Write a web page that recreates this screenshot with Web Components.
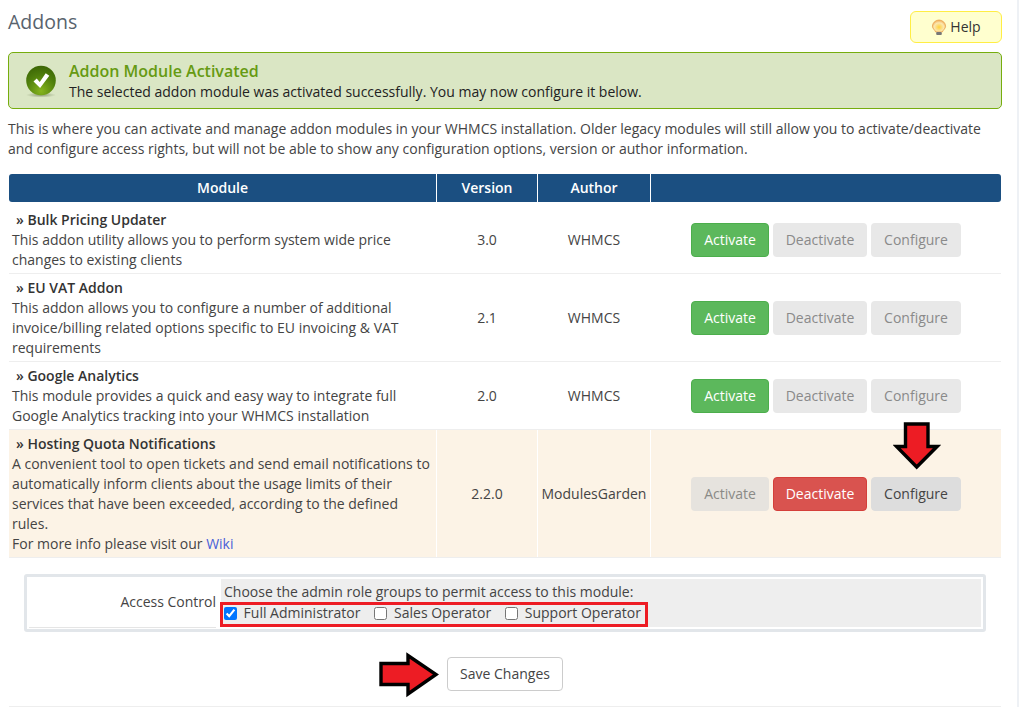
<!DOCTYPE html>
<html lang="en">
<head>
<meta charset="utf-8">
<title>Addons</title>
<style>
  html, body { margin: 0; height: 100%; overflow: hidden; background: #fff; }
  body { font: 14px/20px "Open Sans", sans-serif; color: #444; }
</style>
</head>
<body>
<addons-page>
  <page-head title="Addons"></page-head>
  <success-box heading="Addon Module Activated">The selected addon module was activated successfully. You may now configure it below.</success-box>
  <p>This is where you can activate and manage addon modules in your WHMCS installation. Older legacy modules will still allow you to activate/deactivate and configure access rights, but will not be able to show any configuration options, version or author information.</p>
  <module-table>
    <module-row name="Bulk Pricing Updater" version="3.0" author="WHMCS">This addon utility allows you to perform system wide price changes to existing clients</module-row>
    <module-row name="EU VAT Addon" version="2.1" author="WHMCS">This addon allows you to configure a number of additional invoice/billing related options specific to EU invoicing &amp; VAT requirements</module-row>
    <module-row name="Google Analytics" version="2.0" author="WHMCS">This module provides a quick and easy way to integrate full Google Analytics tracking into your WHMCS installation</module-row>
    <module-row name="Hosting Quota Notifications" version="2.2.0" author="ModulesGarden" active>A convenient tool to open tickets and send email notifications to automatically inform clients about the usage limits of their services that have been exceeded, according to the defined rules.<br>For more info please visit our <a href="#" style="color:#4a5fd8;text-decoration:none">Wiki</a></module-row>
  </module-table>
  <access-control></access-control>
  <save-bar></save-bar>
</addons-page>

<script>
const ARROW_DOWN = `<path d="M12.5 2H35V24.5H44L23.7 45 3.5 24.5H12.5Z" fill="#ed1c24" stroke="#000" stroke-width="3.4"/>`;
const ARROW_RIGHT = `<path d="M2 11.5H29V3.5L57 22.5 29 42V32.5H2Z" fill="#ed1c24" stroke="#000" stroke-width="3.4"/>`;

class AddonsPage extends HTMLElement {
  constructor() {
    super();
    this.attachShadow({ mode: 'open' }).innerHTML = `
      <style>
        :host { display: block; box-sizing: border-box; width: 1019px; height: 707px; padding: 0 17px 0 8px; border-right: 2px solid #eef1f5; }
        .wrap { width: 994px; }
        ::slotted(p) { margin: 10px 0 15px; }
      </style>
      <div class="wrap"><slot></slot></div>`;
  }
}

class PageHead extends HTMLElement {
  constructor() {
    super();
    this.attachShadow({ mode: 'open' }).innerHTML = `
      <style>
        :host { display: flex; justify-content: space-between; align-items: flex-start; height: 52px; }
        h1 { margin: 10px 0 0; font-size: 19.5px; line-height: 24px; font-weight: 400; color: #58636d; }
        .help {
          display: flex; align-items: center; justify-content: center; gap: 3px;
          box-sizing: border-box; width: 92px; height: 32px; margin-top: 11px;
          background: #ffffcf; border: 1px solid #ffee44; border-radius: 6px; color: #333;
        }
        svg { width: 16px; height: 17px; }
      </style>
      <h1>${this.getAttribute('title')}</h1>
      <div class="help">
        <svg viewBox="0 0 16 17">
          <defs><radialGradient id="b" cx=".5" cy=".6" r=".6"><stop offset="0" stop-color="#ffd23c"/><stop offset=".6" stop-color="#fbe7b0"/><stop offset="1" stop-color="#f0a850"/></radialGradient></defs>
          <path d="M8 1a6.6 6.6 0 0 0-6.6 6.2c0 2.4 2.4 3.6 3.3 5.8h6.6c.9-2.2 3.3-3.4 3.3-5.8A6.6 6.6 0 0 0 8 1z" fill="url(#b)" stroke="#e8a24e" stroke-width=".8"/>
          <rect x="5.2" y="13" width="5.6" height="3" rx="1" fill="#777"/>
        </svg>
        <span>Help</span>
      </div>`;
  }
}

class SuccessBox extends HTMLElement {
  constructor() {
    super();
    this.attachShadow({ mode: 'open' }).innerHTML = `
      <style>
        :host {
          display: flex; align-items: center; box-sizing: border-box; height: 57px;
          padding: 0 0 0 16px; gap: 12px;
          background: #dae6c4; border: 1px solid #76ad0e; border-radius: 5px; color: #222;
        }
        svg { width: 32px; height: 33px; flex: none; margin-top: 1px; }
        .text { padding-top: 2px; }
        b { display: block; font-size: 16px; line-height: 20px; font-weight: 600; color: #669a12; margin: -1px 0 1px; }
      </style>
      <svg viewBox="0 0 32 33">
        <defs>
          <radialGradient id="g" cx=".5" cy=".85" r=".85"><stop offset="0" stop-color="#86b51e"/><stop offset=".6" stop-color="#4f7f0c"/><stop offset="1" stop-color="#3c6606"/></radialGradient>
          <radialGradient id="s" cx=".5" cy=".5" r=".5"><stop offset="0" stop-color="#5a6a40" stop-opacity=".6"/><stop offset="1" stop-color="#5a6a40" stop-opacity="0"/></radialGradient>
        </defs>
        <ellipse cx="16" cy="30" rx="15" ry="2.6" fill="url(#s)"/>
        <circle cx="16" cy="15.5" r="14.8" fill="url(#g)"/>
        <path d="M8.5 16.5l3.2-3 3 3.4 6-8.6 3.6 2.4-9.2 12.2z" fill="#fff"/>
      </svg>
      <div class="text"><b>${this.getAttribute('heading')}</b><slot></slot></div>`;
  }
}

const COLUMNS = 'grid-template-columns: 427px 100px 112px 350px; column-gap: 1px;';

class ModuleTable extends HTMLElement {
  constructor() {
    super();
    this.attachShadow({ mode: 'open' }).innerHTML = `
      <style>
        :host { display: block; margin: 0 1px; }
        .head { display: grid; ${COLUMNS} height: 28px; margin-bottom: 4px; }
        .head div {
          display: flex; align-items: center; justify-content: center;
          background: #1b4f81; color: #fff; font-weight: 600;
        }
        .head div:first-child { border-radius: 3px 0 0 3px; }
        .head div:last-child { border-radius: 0 3px 3px 0; }
      </style>
      <div class="head"><div>Module</div><div>Version</div><div>Author</div><div></div></div>
      <slot></slot>`;
  }
}

class ModuleRow extends HTMLElement {
  constructor() {
    super();
    const active = this.hasAttribute('active');
    this.attachShadow({ mode: 'open' }).innerHTML = `
      <style>
        :host { display: grid; ${COLUMNS} border-bottom: 1px solid #eee; position: relative; }
        .cell { padding: 4px 3px 3px; display: flex; align-items: center; justify-content: center; text-align: center; ${active ? 'background: #fcf3e6;' : ''} }
        .info { display: block; text-align: left; }
        b { display: block; font-weight: 600; padding-left: 4px; color: #333; }
        .actions { gap: 4px; }
        svg { position: absolute; left: 884px; top: -8px; width: 48px; height: 49px; }
      </style>
      <div class="cell info"><b>» ${this.getAttribute('name')}</b><slot></slot></div>
      <div class="cell">${this.getAttribute('version')}</div>
      <div class="cell">${this.getAttribute('author')}</div>
      <div class="cell actions">
        <action-button kind="${active ? 'offwarm' : 'green'}" w="78">Activate</action-button>
        <action-button kind="${active ? 'red' : 'off'}" w="94">Deactivate</action-button>
        <action-button kind="${active ? 'plain' : 'off'}" w="90">Configure</action-button>
      </div>
      ${active ? `<svg viewBox="0 0 48 49">${ARROW_DOWN}</svg>` : ''}`;
  }
}

class ActionButton extends HTMLElement {
  constructor() {
    super();
    const styles = {
      green: 'background:#5cb85c;border-color:#4cae4c;color:#fff;',
      red: 'background:#d9534f;border-color:#d43f3a;color:#fff;',
      plain: 'background:#ddd;border-color:#ddd;color:#444;',
      off: 'border-color:transparent;color:#8a8a8a;background:#e8e8e8;',
      offwarm: 'border-color:transparent;color:#8a8a86;background:#e6e3de;',
    };
    this.attachShadow({ mode: 'open' }).innerHTML = `
      <style>
        :host { display: block; }
        div {
          box-sizing: border-box; height: 34px; width: ${this.getAttribute('w')}px;
          display: flex; align-items: center; justify-content: center;
          border: 1px solid; border-radius: 4px; ${styles[this.getAttribute('kind')]}
        }
      </style>
      <div><slot></slot></div>`;
  }
}

class AccessControl extends HTMLElement {
  constructor() {
    super();
    this.attachShadow({ mode: 'open' }).innerHTML = `
      <style>
        :host {
          display: grid; grid-template-columns: 187px 1fr; column-gap: 5px;
          box-sizing: border-box; width: 962px; height: 58px; margin: 16px 0 0 16px;
          padding: 2px; border: 3px solid #e2e6ea; border-radius: 3px;
        }
        .label { display: flex; align-items: center; justify-content: flex-end; padding-bottom: 3px; border-bottom: 1px solid #e5e5e5; margin-bottom: -1px; }
        .field { position: relative; background: #eee; padding: 3px 3px 0; }
        .opts { display: flex; gap: 14px; margin-top: 1px; }
        label { display: flex; align-items: center; gap: 6.6px; }
        input { width: 13px; height: 13px; margin: 0; }
        .mark { position: absolute; left: -1px; top: 23px; width: 428px; height: 25px; box-sizing: border-box; border: 3px solid #ed1c24; }
      </style>
      <div class="label">Access Control</div>
      <div class="field">
        <div>Choose the admin role groups to permit access to this module:</div>
        <div class="opts">
          <label><input type="checkbox" checked>Full Administrator</label>
          <label><input type="checkbox">Sales Operator</label>
          <label><input type="checkbox">Support Operator</label>
        </div>
        <div class="mark"></div>
      </div>`;
  }
}

class SaveBar extends HTMLElement {
  constructor() {
    super();
    this.attachShadow({ mode: 'open' }).innerHTML = `
      <style>
        :host { display: block; position: relative; margin: 25px 1px 0; height: 49px; border-bottom: 1px solid #eee; }
        .row { display: flex; justify-content: center; }
        button {
          box-sizing: border-box; width: 116px; height: 34px; padding: 0;
          background: #fff; border: 1px solid #ccc; border-radius: 4px;
          font: inherit; color: #444;
        }
        svg { position: absolute; left: 370px; top: -5px; width: 62px; height: 46px; }
      </style>
      <div class="row"><button type="button">Save Changes</button></div>
      <svg viewBox="0 0 62 46">${ARROW_RIGHT}</svg>`;
  }
}

customElements.define('addons-page', AddonsPage);
customElements.define('page-head', PageHead);
customElements.define('success-box', SuccessBox);
customElements.define('module-table', ModuleTable);
customElements.define('module-row', ModuleRow);
customElements.define('action-button', ActionButton);
customElements.define('access-control', AccessControl);
customElements.define('save-bar', SaveBar);
</script>
</body>
</html>
